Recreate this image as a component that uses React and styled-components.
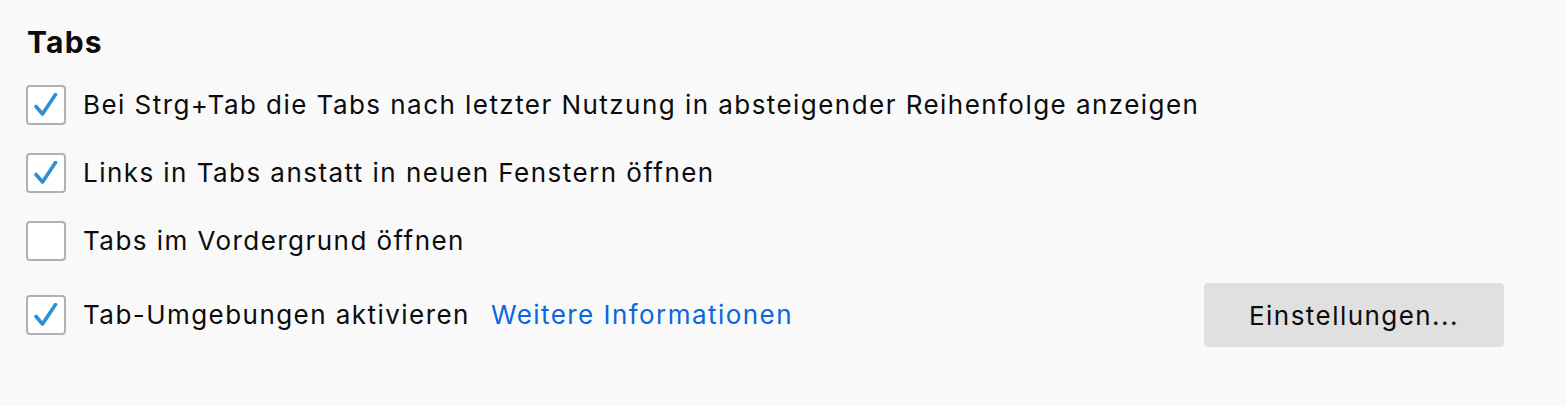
import React from "react";
import styled, { createGlobalStyle } from "styled-components";

const Global = createGlobalStyle`
  html, body { margin: 0; padding: 0; background: #f9f9fa; }
  body { font-family: Inter, "Open Sans", "Liberation Sans", sans-serif; color: #0c0c0d; }
`;

const Page = styled.div`
  width: 1566px;
  height: 406px;
  box-sizing: border-box;
  padding: 22px 62px 0 26px;
  background: #f9f9f9;
`;

const Heading = styled.h2`
  margin: 0 0 0 1px;
  font-size: 30px;
  font-weight: 700;
  letter-spacing: 1.2px;
  line-height: 40px;
  height: 40px;
  color: #0c0c0d;
`;

const List = styled.div`
  display: flex;
  flex-direction: column;
  margin-top: 23px;
`;

const Row = styled.div`
  display: flex;
  align-items: center;
  min-height: 40px;
  margin-top: ${(p) => p.$gap || 0}px;
`;

const Box = styled.span`
  box-sizing: border-box;
  width: 40px;
  height: 40px;
  flex: none;
  border: 2px solid #b1b1b3;
  border-radius: 4px;
  background: #ffffff;
  display: flex;
  align-items: center;
  justify-content: center;
`;

const Label = styled.span`
  margin-left: 17px;
  font-size: 26px;
  letter-spacing: 1.45px;
  line-height: 30px;
  color: #0c0c0d;
`;

const Link = styled.a`
  margin-left: 21px;
  font-size: 26px;
  letter-spacing: 1.45px;
  line-height: 30px;
  color: #0a67de;
  text-decoration: none;
`;

const Spacer = styled.span`
  flex: 1;
`;

const Button = styled.button`
  width: 300px;
  height: 64px;
  border: none;
  border-radius: 4px;
  background: #e0e0e1;
  font-family: inherit;
  font-size: 26px;
  letter-spacing: 1.45px;
  color: #0c0c0d;
  padding: 0;
`;

const Check = () => (
  <svg width="24" height="24" viewBox="0 0 24 24" style={{ marginLeft: -1 }}>
    <path d="M2 13.5 L8.5 21 L21.5 1.5" fill="none" stroke="#2b90d9" strokeWidth="3.6" strokeLinecap="round" strokeLinejoin="round" />
  </svg>
);

const CheckRow = ({ checked, children, gap }) => (
  <Row $gap={gap}>
    <Box>{checked && <Check />}</Box>
    {children}
  </Row>
);

export default function App() {
  return (
    <>
      <Global />
      <Page>
        <Heading>Tabs</Heading>
        <List>
          <CheckRow checked>
            <Label>Bei Strg+Tab die Tabs nach letzter Nutzung in absteigender Reihenfolge anzeigen</Label>
          </CheckRow>
          <CheckRow checked gap={28}>
            <Label>Links in Tabs anstatt in neuen Fenstern öffnen</Label>
          </CheckRow>
          <CheckRow gap={28}>
            <Label>Tabs im Vordergrund öffnen</Label>
          </CheckRow>
          <CheckRow checked gap={22}>
            <Label>Tab-Umgebungen aktivieren</Label>
            <Link href="#">Weitere Informationen</Link>
            <Spacer />
            <Button>Einstellungen...</Button>
          </CheckRow>
        </List>
      </Page>
    </>
  );
}
